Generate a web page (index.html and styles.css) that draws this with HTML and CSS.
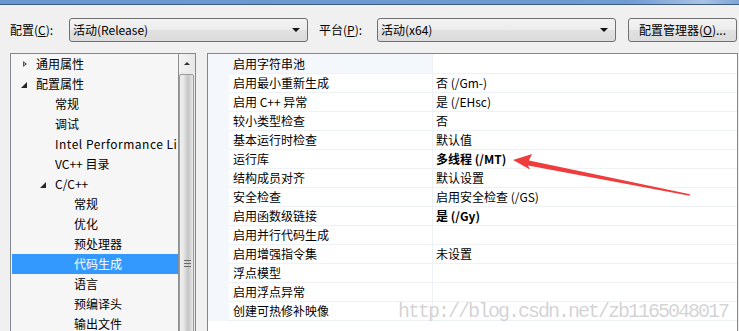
FILE: index.html
```html
<!DOCTYPE html>
<html lang="zh-CN">
<head>
  <meta charset="UTF-8" />
  <title>属性页</title>
  <link rel="stylesheet" href="styles.css">
</head>
<body>

<!-- 窗口标题栏的底边 -->
<div class="titlebar"></div>

<!-- 配置 / 平台 -->
<div class="toolbar">
  <span class="label label-config">配置(<u>C</u>):</span>
  <div class="combo">
    <span>活动(Release)</span>
    <i class="drop"></i>
  </div>
  <span class="label label-platform">平台(<u>P</u>):</span>
  <div class="combo">
    <span>活动(x64)</span>
    <i class="drop"></i>
  </div>
  <div class="btn">配置管理器(<u>O</u>)...</div>
</div>

<div class="main">
  <!-- 左侧树 -->
  <div class="tree-panel">
    <div class="tree">
      <div class="node lv0"><i class="tri closed"></i>通用属性</div>
      <div class="node lv0"><i class="tri open"></i>配置属性</div>
      <div class="node lv1">常规</div>
      <div class="node lv1">调试</div>
      <div class="node lv1 wide">Intel Performance Library</div>
      <div class="node lv1">VC++ 目录</div>
      <div class="node lv1"><i class="tri open"></i>C/C++</div>
      <div class="node lv2">常规</div>
      <div class="node lv2">优化</div>
      <div class="node lv2">预处理器</div>
      <div class="node lv2 selected">代码生成</div>
      <div class="node lv2">语言</div>
      <div class="node lv2">预编译头</div>
      <div class="node lv2">输出文件</div>
    </div>
    <div class="vscroll">
      <div class="vscroll-up"><i></i></div>
      <div class="vscroll-thumb"><span class="grip"></span></div>
    </div>
  </div>

  <!-- 右侧属性表 -->
  <div class="grid-panel">
    <div class="prop first"><div class="gut"></div><div class="name">启用字符串池</div><div class="val"></div></div>
    <div class="prop"><div class="gut"></div><div class="name">启用最小重新生成</div><div class="val">否 (/Gm-)</div></div>
    <div class="prop"><div class="gut"></div><div class="name">启用 C++ 异常</div><div class="val">是 (/EHsc)</div></div>
    <div class="prop"><div class="gut"></div><div class="name">较小类型检查</div><div class="val">否</div></div>
    <div class="prop"><div class="gut"></div><div class="name">基本运行时检查</div><div class="val">默认值</div></div>
    <div class="prop"><div class="gut"></div><div class="name">运行库</div><div class="val bold">多线程 (/MT)</div></div>
    <div class="prop"><div class="gut"></div><div class="name">结构成员对齐</div><div class="val">默认设置</div></div>
    <div class="prop"><div class="gut"></div><div class="name">安全检查</div><div class="val">启用安全检查 (/GS)</div></div>
    <div class="prop"><div class="gut"></div><div class="name">启用函数级链接</div><div class="val bold">是 (/Gy)</div></div>
    <div class="prop"><div class="gut"></div><div class="name">启用并行代码生成</div><div class="val"></div></div>
    <div class="prop"><div class="gut"></div><div class="name">启用增强指令集</div><div class="val">未设置</div></div>
    <div class="prop"><div class="gut"></div><div class="name">浮点模型</div><div class="val"></div></div>
    <div class="prop"><div class="gut"></div><div class="name">启用浮点异常</div><div class="val"></div></div>
    <div class="prop"><div class="gut"></div><div class="name">创建可热修补映像</div><div class="val"></div></div>
  </div>
</div>

<!-- 红色箭头标注 -->
<svg class="arrow" width="739" height="331" viewBox="0 0 739 331">
  <polygon points="513,160 532,154 529,160.5 690,194.3 689.5,195.8 528,165.5 530,169.5" fill="#ef3d3d" />
</svg>

<div class="watermark">http://blog.csdn.net/zb1165048017</div>

</body>
</html>
```

FILE: styles.css
```css
* {
  box-sizing: border-box;
}
html, body {
  overflow: hidden;
}
body {
  margin: 0;
  height: 331px;
  background: #f0f0f0;
  color: #000;
  font-family: "Noto Sans CJK SC", "Noto Sans", sans-serif;
  font-size: 12px;
  position: relative;
}
u {
  text-decoration: underline;
  text-underline-offset: 1px;
}

.titlebar {
  height: 5px;
  background: linear-gradient(to right, #6b97cf, #6f9ad2 85%, #a9c3e4 95%, #7ea4d6);
  border-bottom: 1px solid #3e5b80;
}

/* 顶部 */
.toolbar {
  display: flex;
  align-items: center;
  height: 24px;
  margin: 13px 0 11px 10px;
}
.label {
  line-height: 24px;
}
.label-config {
  width: 59px;
}
.label-platform {
  width: 58px;
  margin-left: 11px;
}
.combo, .btn {
  height: 24px;
  border: 1px solid #707070;
  border-radius: 3px;
  background: linear-gradient(#f3f3f3, #ececec 50%, #e1e1e1 52%, #dbdbdb);
  line-height: 22px;
}
.combo {
  width: 239px;
  display: flex;
  justify-content: space-between;
  align-items: center;
  padding: 0 4px 0 3px;
}
.drop {
  width: 0;
  height: 0;
  border-left: 4px solid transparent;
  border-right: 4px solid transparent;
  border-top: 4px solid #111;
  margin-right: 3px;
}
.btn {
  width: 109px;
  margin-left: 12px;
  text-align: center;
}

/* 主体 */
.main {
  display: flex;
  align-items: flex-start;
  margin-left: 10px;
  gap: 11px;
}

.tree-panel {
  width: 186px;
  height: 300px;
  display: flex;
  border: 1px solid #828790;
  background: #f6f6f6;
}
.tree {
  flex: 1;
  overflow: hidden;
  white-space: nowrap;
}
.node {
  height: 20px;
  line-height: 20px;
  position: relative;
}
.node.lv0 { padding-left: 25px; }
.node.lv1 { padding-left: 44px; }
.node.lv2 { padding-left: 63px; }
.node.wide {
  letter-spacing: 0.5px;
}
.node.selected {
  margin-left: 1px;
  padding-left: 62px;
  background: #3399ff;
  color: #fff;
}
.tri {
  position: absolute;
  width: 0;
  height: 0;
}
.tri.closed {
  left: 12px;
  top: 7px;
  border-top: 3px solid transparent;
  border-bottom: 3px solid transparent;
  border-left: 4px solid #555;
}
.tri.closed::after {
  content: "";
  position: absolute;
  left: -3px;
  top: -1px;
  border-top: 1px solid transparent;
  border-bottom: 1px solid transparent;
  border-left: 1.5px solid #f6f6f6;
}
.tri.open {
  top: 8px;
  border-left: 6px solid transparent;
  border-bottom: 6px solid #262626;
}
.lv0 .tri.open { left: 10px; }
.lv1 .tri.open { left: 29px; }

.vscroll {
  width: 17px;
  display: flex;
  flex-direction: column;
  background: #eaeaea;
  border-left: 1px solid #8f8f8f;
}
.vscroll-up {
  height: 18px;
  display: flex;
  align-items: center;
  justify-content: center;
  background: linear-gradient(to right, #f2f2f2, #e8e8e8);
}
.vscroll-up i {
  width: 0;
  height: 0;
  border-left: 3px solid transparent;
  border-right: 3px solid transparent;
  border-bottom: 3px solid #333;
}
.vscroll-thumb {
  flex: 1;
  margin: 2px 1px 0 0;
  border: 1px solid #9a9a9a;
  border-radius: 2px;
  background: linear-gradient(to right, #f0f0f0 0%, #e6e6e6 30%, #cfcfcf 50%, #c6c6c6 65%, #dadada 85%, #e8e8e8 100%);
  position: relative;
}
.grip {
  position: absolute;
  left: 4px;
  top: 185px;
  width: 7px;
  height: 7px;
  border-top: 1px solid #6a6a6a;
  border-bottom: 1px solid #6a6a6a;
}
.grip::after {
  content: "";
  position: absolute;
  left: 0;
  right: 0;
  top: 2px;
  border-top: 1px solid #6a6a6a;
}

.grid-panel {
  flex: 1;
  height: 300px;
  margin-right: 1px;
  border: 1px solid #828790;
  background: #fff;
}
.prop {
  display: grid;
  grid-template-columns: 21px 204px 1fr;
  height: 19px;
  line-height: 18px;
}
.prop.first {
  height: 20px;
  line-height: 19px;
}
.gut {
  background: #f4f7fc;
}
.name, .val {
  border-bottom: 1px solid #eef1f6;
  white-space: nowrap;
  overflow: hidden;
}
.name {
  padding-left: 4px;
  border-right: 1px solid #eef1f6;
}
.val {
  padding-left: 3px;
}
.prop.first .name {
  background: #f4f7fc;
}
.bold {
  font-weight: 700;
}

.arrow {
  position: absolute;
  left: 0;
  top: 0;
}
.watermark {
  position: absolute;
  left: 398px;
  top: 300px;
  font-family: "Liberation Mono", monospace;
  font-size: 20px;
  letter-spacing: -2px;
  color: rgba(140, 140, 140, 0.38);
  white-space: nowrap;
}
```
